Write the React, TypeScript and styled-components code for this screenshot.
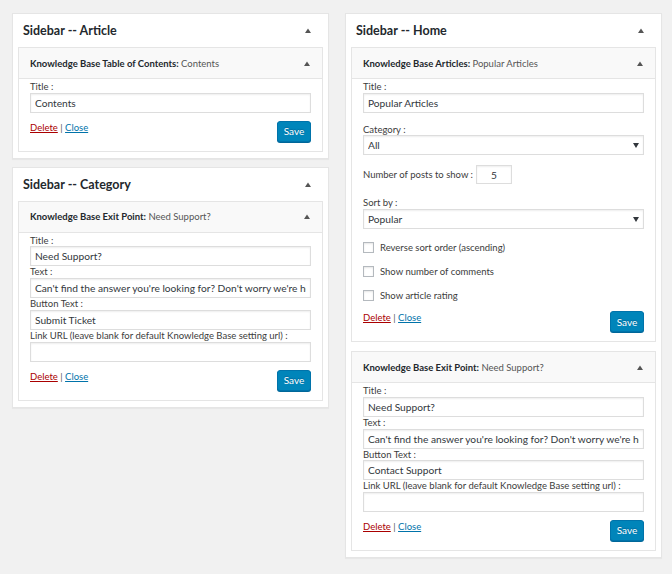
import React from 'react';
import styled, { createGlobalStyle } from 'styled-components';

const GlobalStyle = createGlobalStyle`
  body {
    margin: 0;
    background: #f1f1f1;
    font-family: Lato, "Liberation Sans", sans-serif;
    color: #444;
  }
  * { box-sizing: border-box; }
`;

const Page = styled.div`
  display: flex;
  align-items: flex-start;
  gap: 16px;
  width: 672px;
  height: 574px;
  padding: 13px 0 0 12px;
`;

const Column = styled.div`
  width: 317px;
  display: flex;
  flex-direction: column;
  gap: 8px;
`;

const Sidebar = styled.section`
  background: #fff;
  border: 1px solid #e5e5e5;
  box-shadow: 0 1px 1px rgba(0, 0, 0, 0.04);
  padding: 0 5px 6px;
  display: flex;
  flex-direction: column;
  gap: 9px;
`;

const SidebarHeader = styled.div`
  display: flex;
  align-items: center;
  justify-content: space-between;
  height: 33px;
  margin-bottom: -9px;
  padding: 0 12px 0 5px;
`;

const SidebarTitle = styled.h2`
  margin: 0;
  font-size: 12.5px;
  font-weight: 700;
  color: #23282d;
`;

const Widget = styled.div`
  border: 1px solid #e5e5e5;
  background: #fff;
`;

const WidgetHeader = styled.div`
  display: flex;
  align-items: center;
  justify-content: space-between;
  height: 31px;
  background: #f9f9f9;
  border-bottom: 1px solid #e5e5e5;
  padding: 0 12px 0 11px;
`;

const WidgetTitle = styled.h3`
  margin: 0;
  font-size: 9.5px;
  font-weight: 700;
  color: #23282d;

  span {
    font-weight: 400;
    color: #555;
  }
`;

const WidgetBody = styled.div`
  padding: 2px 11px 9px;
`;

const Label = styled.label<{ $gap?: number }>`
  display: block;
  margin-top: ${p => p.$gap || 0}px;
  font-size: 9.5px;
  line-height: 11.7px;
  color: #3c3c3c;
  white-space: nowrap;
`;

const TextInput = styled.input`
  display: block;
  width: 100%;
  height: 20px;
  margin: 0;
  padding: 0 4px;
  border: 1px solid #ddd;
  box-shadow: inset 0 1px 2px rgba(0, 0, 0, 0.07);
  font-family: inherit;
  font-size: 10.2px;
  color: #32373c;
  background: #fff;
  outline: none;
`;

const SelectWrap = styled.div`
  position: relative;
`;

const Select = styled.select`
  display: block;
  width: 100%;
  height: 20px;
  margin: 0;
  padding: 0 4px;
  border: 1px solid #ddd;
  border-radius: 0;
  box-shadow: inset 0 1px 2px rgba(0, 0, 0, 0.07);
  appearance: none;
  background: #fff;
  font-family: inherit;
  font-size: 10.2px;
  color: #32373c;
  outline: none;
`;

const SelectArrow = styled.svg`
  position: absolute;
  right: 5px;
  top: 8px;
  pointer-events: none;
`;

const InlineField = styled.div`
  display: flex;
  align-items: center;
  gap: 3px;
  margin-top: 10px;
`;

const SmallInput = styled(TextInput)`
  width: 36px;
  height: 19px;
  text-align: center;
`;

const CheckList = styled.div`
  margin-top: 6px;
`;

const CheckRow = styled.label`
  display: flex;
  align-items: center;
  gap: 6px;
  height: 24px;
  font-size: 9.5px;
  color: #3c3c3c;
`;

const Checkbox = styled.input`
  appearance: none;
  width: 11px;
  height: 11px;
  margin: 0;
  border: 1px solid #b4b9be;
  background: #fff;
  box-shadow: inset 0 1px 2px rgba(0, 0, 0, 0.1);
`;

const Actions = styled.div<{ $gap?: number }>`
  display: flex;
  align-items: flex-start;
  justify-content: space-between;
  margin-top: ${p => p.$gap ?? 8}px;
`;

const Links = styled.div`
  font-size: 9.5px;
  line-height: 13px;
  color: #555;
`;

const DeleteLink = styled.a`
  color: #a00;
  text-decoration: underline;
`;

const CloseLink = styled.a`
  color: #0073aa;
  text-decoration: underline;
`;

const SaveButton = styled.button`
  width: 34px;
  height: 21px;
  padding: 0;
  background: #0085ba;
  border: 1px solid #0073aa;
  border-radius: 3px;
  box-shadow: 0 1px 0 #006799;
  color: #fff;
  font-family: inherit;
  font-size: 10px;
  text-shadow: 0 -1px 1px #006799;
`;

const Toggle = () => (
  <svg width="6" height="5" viewBox="0 0 6 5">
    <path d="M0 5 L3 0.5 L6 5 Z" fill="#555" />
  </svg>
);

const Down = () => (
  <SelectArrow width="6" height="5" viewBox="0 0 6 5">
    <path d="M0 0 L6 0 L3 5 Z" fill="#32373c" />
  </SelectArrow>
);

const WidgetActions = ({ gap }: { gap?: number }) => (
  <Actions $gap={gap}>
    <Links>
      <DeleteLink>Delete</DeleteLink> | <CloseLink>Close</CloseLink>
    </Links>
    <SaveButton>Save</SaveButton>
  </Actions>
);

const WidgetBox = ({ name, title, children }: { name: string; title: string; children: React.ReactNode }) => (
  <Widget>
    <WidgetHeader>
      <WidgetTitle>
        {name}: <span>{title}</span>
      </WidgetTitle>
      <Toggle />
    </WidgetHeader>
    <WidgetBody>{children}</WidgetBody>
  </Widget>
);

const SidebarBox = ({ title, children }: { title: string; children: React.ReactNode }) => (
  <Sidebar>
    <SidebarHeader>
      <SidebarTitle>{title}</SidebarTitle>
      <Toggle />
    </SidebarHeader>
    {children}
  </Sidebar>
);

const ExitPoint = ({ button }: { button: string }) => (
  <WidgetBox name="Knowledge Base Exit Point" title="Need Support?">
    <Label>Title :</Label>
    <TextInput readOnly value="Need Support?" />
    <Label>Text :</Label>
    <TextInput readOnly value="Can't find the answer you're looking for? Don't worry we're here to help!" />
    <Label>Button Text :</Label>
    <TextInput readOnly value={button} />
    <Label>Link URL (leave blank for default Knowledge Base setting url) :</Label>
    <TextInput readOnly value="" />
    <WidgetActions />
  </WidgetBox>
);

export default function App() {
  return (
    <>
      <GlobalStyle />
      <Page>
        <Column>
          <SidebarBox title="Sidebar -- Article">
            <WidgetBox name="Knowledge Base Table of Contents" title="Contents">
              <Label>Title :</Label>
              <TextInput readOnly value="Contents" />
              <WidgetActions />
            </WidgetBox>
          </SidebarBox>
          <SidebarBox title="Sidebar -- Category">
            <ExitPoint button="Submit Ticket" />
          </SidebarBox>
        </Column>
        <Column>
          <SidebarBox title="Sidebar -- Home">
            <WidgetBox name="Knowledge Base Articles" title="Popular Articles">
              <Label>Title :</Label>
              <TextInput readOnly value="Popular Articles" />
              <Label $gap={11}>Category :</Label>
              <SelectWrap>
                <Select defaultValue="all">
                  <option value="all">All</option>
                </Select>
                <Down />
              </SelectWrap>
              <InlineField>
                <Label as="span">Number of posts to show :</Label>
                <SmallInput readOnly value="5" />
              </InlineField>
              <Label $gap={13}>Sort by :</Label>
              <SelectWrap>
                <Select defaultValue="popular">
                  <option value="popular">Popular</option>
                </Select>
                <Down />
              </SelectWrap>
              <CheckList>
                <CheckRow>
                  <Checkbox type="checkbox" />
                  Reverse sort order (ascending)
                </CheckRow>
                <CheckRow>
                  <Checkbox type="checkbox" />
                  Show number of comments
                </CheckRow>
                <CheckRow>
                  <Checkbox type="checkbox" />
                  Show article rating
                </CheckRow>
              </CheckList>
              <WidgetActions gap={4} />
            </WidgetBox>
            <ExitPoint button="Contact Support" />
          </SidebarBox>
        </Column>
      </Page>
    </>
  );
}
